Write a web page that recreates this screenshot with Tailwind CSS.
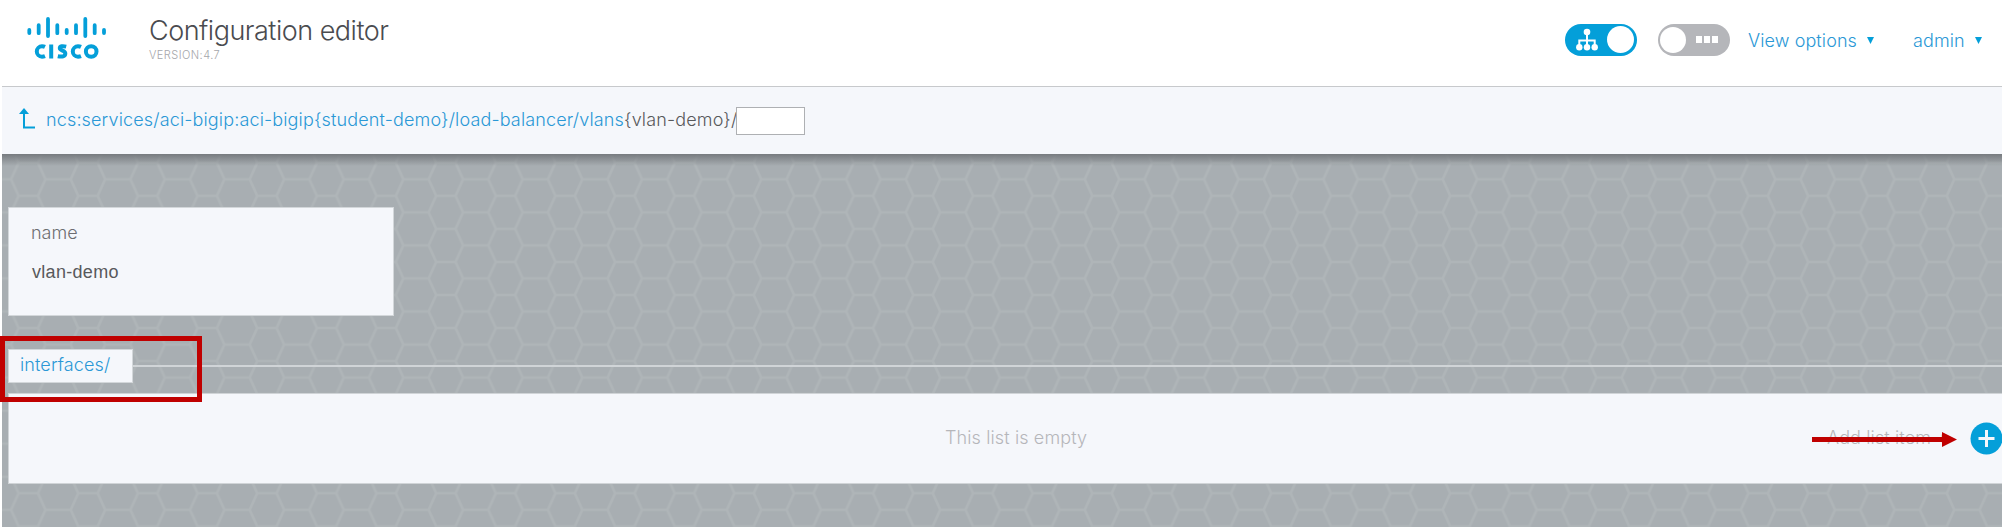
<!DOCTYPE html>
<html lang="en">
<head>
<meta charset="utf-8">
<title>Configuration editor</title>
<script src="https://cdn.jsdelivr.net/npm/@tailwindcss/browser@4"></script>
</head>
<body class="relative h-[527px] w-[2002px] overflow-hidden bg-white pl-[2px] font-['Inter',sans-serif]">
<header class="flex h-[86px] items-start justify-between">
  <div class="flex">
    <svg class="ml-[24px] mt-[16px] h-[44px] w-[82px]" viewBox="0 0 82 44" fill="none" stroke="#049fd9" stroke-linecap="round">
      <g stroke-width="3.8"><path d="M3.300 14v3M12.700 9.200v8M22 3v17M31.300 9.200v8M40.700 14v3M50 9.200v8M59.300 3v17M68.700 9.200v8M78 14v3"/></g>
      <g stroke-width="4" stroke-linecap="butt"><path d="M19 30.900c-1-.5-2-.6-3-.6a5.200 5.200 0 0 0 0 10.400c1 0 2-.2 3-.6M25.200 28.600v13.800M40.200 30.600c-3.500-.8-6.400-.6-6.400 1.500 0 3.300 5.500 1.800 5.500 5.500 0 3-3.300 3.500-7.500 2.600M55 30.900c-1-.5-2-.6-3-.6a5.200 5.200 0 0 0 0 10.400c1 0 2-.2 3-.6"/><circle cx="65.200" cy="35.500" r="5.300"/></g>
    </svg>
    <div class="ml-[41px] mt-[13px]">
      <h1 class="h-[35px] whitespace-nowrap text-[27px] font-light leading-[35px] tracking-[-0.5px] text-[#4a4b4f]">Configuration editor</h1>
      <p class="text-[11px] font-light leading-[14px] tracking-[0.450px] text-[#a5a6aa]">VERSION:4.7</p>
    </div>
  </div>
  <div class="mr-[20px] mt-[23px] flex h-[33px] items-center text-[18px] font-light tracking-[0.100px] text-[#2a98d6]">
    <div class="flex h-[32px] w-[72px] items-center justify-end rounded-full bg-[#049fd9] pr-[3px]">
      <svg class="mr-[8px] h-[23px] w-[24px]" viewBox="0 0 24 23" fill="#fff"><circle cx="12" cy="4" r="3.300"/><circle cx="4.300" cy="19.300" r="3.200"/><circle cx="12" cy="19.300" r="3.200"/><circle cx="19.700" cy="19.300" r="3.200"/><path d="M12 5v14M4.300 19v-6.500h15.400v6.500" fill="none" stroke="#fff" stroke-width="2"/></svg>
      <span class="size-[27px] rounded-full bg-white"></span>
    </div>
    <div class="ml-[21px] flex h-[32px] w-[72px] items-center rounded-full bg-[#b5b6ba] pl-[2px]">
      <span class="size-[26px] rounded-full bg-white"></span>
      <span class="ml-[10px] flex gap-[2px]"><i class="h-[7px] w-[6px] bg-white"></i><i class="h-[7px] w-[6px] bg-white"></i><i class="h-[7px] w-[6px] bg-white"></i></span>
    </div>
    <span class="ml-[18px] mt-px w-[109px] whitespace-nowrap">View options</span>
    <svg class="ml-[10px] mt-px h-[7px] w-[7px]" viewBox="0 0 7 7"><path d="M0 0h7L3.500 7z" fill="#049fd9"/></svg>
    <span class="ml-[39px] mt-px w-[52px] whitespace-nowrap">admin</span>
    <svg class="ml-[10px] mt-px h-[7px] w-[7px]" viewBox="0 0 7 7"><path d="M0 0h7L3.500 7z" fill="#049fd9"/></svg>
  </div>
</header>
<nav class="flex h-[68px] items-start border-t border-[#c7c9cc] bg-[#f5f7fb] pl-[17px]">
  <svg class="mt-[21px] h-[22px] w-[17px]" viewBox="0 0 17 22"><path d="M5 5v14.500h11" fill="none" stroke="#049fd9" stroke-width="2"/><path d="M5 0l5 6H0z" fill="#049fd9"/></svg>
  <div class="ml-[10px] mt-[21px] h-[24px] w-[690px] whitespace-nowrap text-[18px] font-light leading-[24px] tracking-[0.145px] text-[#2a98d6]">ncs:services/aci-bigip:aci-bigip{student-demo}/load-balancer/vlans<span class="text-[#58595b]">{vlan-demo}/</span></div>
  <div class="mt-[20px] h-[28px] w-[69px] border border-[#aeb0b3] bg-white"></div>
</nav>
<main class="relative h-[373px] bg-[#a8aeb2] pt-[53px]">
  <svg class="absolute inset-0 h-full w-full">
    <defs><pattern id="hex" width="59.650" height="33.050" patternUnits="userSpaceOnUse" patternTransform="translate(-3.500 25.300)">
      <path d="M-13 0H12.600M-13 33.050H12.600M47 0H60M47 33.050H60M20.100 16.520H39.500M12.600 0L20.100 16.520L12.600 33.050M47 0L39.500 16.520L47 33.050" fill="none" stroke="#afb5b8" stroke-width="2.600"/>
    </pattern></defs>
    <rect width="2000" height="373" fill="url(#hex)"/>
  </svg>
  <div class="absolute inset-x-0 top-0 h-[12px] bg-linear-to-b from-[#777b7f] to-transparent"></div>
  <section class="relative ml-[6px] h-[109px] w-[386px] border border-[#d3d7da] bg-[#f5f7fb] pl-[22px] pt-[13px] text-[18px]">
    <div class="h-[24px] leading-[24px] font-light text-[#6d6e72]">name</div>
    <div class="ml-[1px] mt-[15px] h-[24px] font-['Liberation_Sans',sans-serif] leading-[24px] tracking-[0.300px] text-[#58595b]">vlan-demo</div>
  </section>
  <div class="relative mt-[33px] flex h-[34px] items-center pl-[6px]">
    <div class="h-[34px] w-[125px] border border-[#d3d7da] bg-[#f5f7fb] pl-[11px] text-[18px] font-light leading-[29px] tracking-[0.120px] text-[#2a98d6]">interfaces/</div>
    <div class="h-[2px] flex-1 bg-[#d0d4d7]"></div>
  </div>
  <section class="relative ml-[6px] mt-[10px] flex h-[91px] border-y border-l border-[#d0d4d7] bg-[#f5f7fb] text-[18px] font-light tracking-[0.120px] text-[#b5b6ba]">
    <div class="ml-[936px] mt-[32px] w-[882px] shrink-0 whitespace-nowrap leading-[24px]">This list is empty</div>
    <div class="mt-[32px] w-[128px] shrink-0 whitespace-nowrap leading-[24px]">Add list item +</div>
    <svg class="ml-[15px] mt-[28px] h-[33px] w-[33px] shrink-0" viewBox="0 0 33 33"><circle cx="16.500" cy="16.500" r="16" fill="#049fd9"/><path d="M8.500 16.500h16M16.500 8v17" stroke="#f5f7fb" stroke-width="3"/></svg>
  </section>
</main>
<div class="absolute left-0 top-[336px] h-[66px] w-[202px] border-[5px] border-[#c00000]"></div>
<svg class="absolute left-[1812px] top-[431px] h-[17px] w-[146px]" viewBox="0 0 146 17"><path d="M0 6h130V1l15 7.500-15 7.500v-5H0z" fill="#c00000"/></svg>
</body>
</html>
